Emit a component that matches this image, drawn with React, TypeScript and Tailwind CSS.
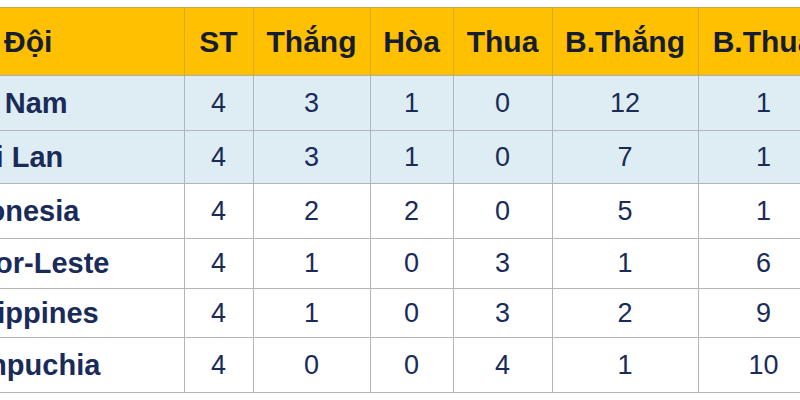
import React from 'react'

interface TeamRow {
  name: string
  played: number
  won: number
  drawn: number
  lost: number
  goalsFor: number
  goalsAgainst: number
  height: string
  highlight: boolean
}

const rows: TeamRow[] = [
  { name: 'Việt Nam', played: 4, won: 3, drawn: 1, lost: 0, goalsFor: 12, goalsAgainst: 1, height: 'h-[55px]', highlight: true },
  { name: 'Thái Lan', played: 4, won: 3, drawn: 1, lost: 0, goalsFor: 7, goalsAgainst: 1, height: 'h-[53px]', highlight: true },
  { name: 'Indonesia', played: 4, won: 2, drawn: 2, lost: 0, goalsFor: 5, goalsAgainst: 1, height: 'h-[55px]', highlight: false },
  { name: 'Timor-Leste', played: 4, won: 1, drawn: 0, lost: 3, goalsFor: 1, goalsAgainst: 6, height: 'h-[50px]', highlight: false },
  { name: 'Philippines', played: 4, won: 1, drawn: 0, lost: 3, goalsFor: 2, goalsAgainst: 9, height: 'h-[49px]', highlight: false },
  { name: 'Campuchia', played: 4, won: 0, drawn: 0, lost: 4, goalsFor: 1, goalsAgainst: 10, height: 'h-[55px]', highlight: false }
]

const headers = ['ST', 'Thắng', 'Hòa', 'Thua', 'B.Thắng', 'B.Thua']

export default function App() {
  return (
    <div
      className="w-[800px] h-[400px] overflow-hidden bg-white pt-[7px]"
      style={{ fontFamily: '"Liberation Sans", Arial, sans-serif' }}
    >
      <table className="table-fixed border-collapse w-[830px] -ml-px leading-none">
        <colgroup>
          <col className="w-[185px]" />
          <col className="w-[69px]" />
          <col className="w-[117px]" />
          <col className="w-[83px]" />
          <col className="w-[99px]" />
          <col className="w-[146px]" />
          <col className="w-[131px]" />
        </colgroup>
        <thead>
          <tr className="h-[68px] bg-[#fec000] border-t border-t-[#c9a55a] border-b border-b-[#a9b0b8] text-[30px]">
            <th className="text-left pl-[5px] font-bold text-[#161d33] border-r border-r-[#d7aa2c]">Đội</th>
            {headers.map((h) => (
              <th key={h} className="text-center font-bold text-[#161d33] border-r border-r-[#d7aa2c] whitespace-nowrap">
                {h}
              </th>
            ))}
          </tr>
        </thead>
        <tbody>
          {rows.map((r) => (
            <tr
              key={r.name}
              className={`${r.height} ${r.highlight ? 'bg-[#deedf4]' : 'bg-white'} border-b border-b-[#b3b6b9]`}
            >
              {/* names are cropped at the left edge, as in the source shot */}
              <td className="overflow-hidden whitespace-nowrap pl-[6px] text-[29px] font-bold text-[#1a2b5a] border-r border-r-[#b3b6b9]">
                <span className="inline-block -ml-[61px]">{r.name}</span>
              </td>
              {[r.played, r.won, r.drawn, r.lost, r.goalsFor, r.goalsAgainst].map((v, i) => (
                <td key={i} className="text-center text-[27px] text-[#1a2b5a] border-r border-r-[#b3b6b9]">
                  {v}
                </td>
              ))}
            </tr>
          ))}
        </tbody>
      </table>
    </div>
  )
}
